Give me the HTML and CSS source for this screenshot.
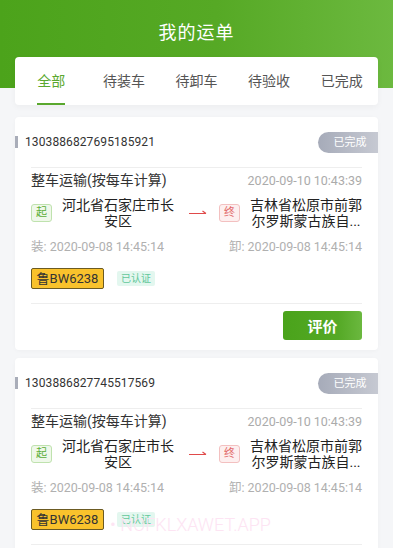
FILE: index.html
```html
<!DOCTYPE html>
<html lang="zh">
<head>
<meta charset="utf-8">
<title>我的运单</title>
<link rel="stylesheet" href="styles.css">
</head>
<body>
<header class="header">
  <h1 class="title">我的运单</h1>
</header>
<nav class="tabs">
  <div class="tab active"><span>全部</span></div>
  <div class="tab"><span>待装车</span></div>
  <div class="tab"><span>待卸车</span></div>
  <div class="tab"><span>待验收</span></div>
  <div class="tab"><span>已完成</span></div>
</nav>

<main class="list">
  <section class="card">
    <div class="card-head">
      <i class="mark"></i>
      <span class="order-no">1303886827695185921</span>
      <span class="status">已完成</span>
    </div>
    <div class="card-body">
      <div class="row-title">
        <span class="type">整车运输(按每车计算)</span>
        <span class="date">2020-09-10 10:43:39</span>
      </div>
      <div class="route">
        <div class="place">
          <span class="tag tag-start">起</span>
          <span class="addr">河北省石家庄市长安区</span>
        </div>
        <svg class="arrow" width="18" height="6" viewBox="0 0 18 6"><path d="M0 3.5H17M13.5 1L17 3.5" fill="none" stroke="#e04a4a" stroke-width="1.2"/></svg>
        <div class="place">
          <span class="tag tag-end">终</span>
          <span class="addr">吉林省松原市前郭尔罗斯蒙古族自...</span>
        </div>
      </div>
      <div class="row-times">
        <span>装: 2020-09-08 14:45:14</span>
        <span>卸: 2020-09-08 14:45:14</span>
      </div>
      <div class="row-tags">
        <span class="plate">鲁BW6238</span>
        <span class="verified">已认证</span>
      </div>
      <div class="actions">
        <button class="btn">评价</button>
      </div>
    </div>
  </section>

  <section class="card">
    <div class="card-head">
      <i class="mark"></i>
      <span class="order-no">1303886827745517569</span>
      <span class="status">已完成</span>
    </div>
    <div class="card-body">
      <div class="row-title">
        <span class="type">整车运输(按每车计算)</span>
        <span class="date">2020-09-10 10:43:39</span>
      </div>
      <div class="route">
        <div class="place">
          <span class="tag tag-start">起</span>
          <span class="addr">河北省石家庄市长安区</span>
        </div>
        <svg class="arrow" width="18" height="6" viewBox="0 0 18 6"><path d="M0 3.5H17M13.5 1L17 3.5" fill="none" stroke="#e04a4a" stroke-width="1.2"/></svg>
        <div class="place">
          <span class="tag tag-end">终</span>
          <span class="addr">吉林省松原市前郭尔罗斯蒙古族自...</span>
        </div>
      </div>
      <div class="row-times">
        <span>装: 2020-09-08 14:45:14</span>
        <span>卸: 2020-09-08 14:45:14</span>
      </div>
      <div class="row-tags">
        <span class="plate">鲁BW6238</span>
        <span class="verified">已认证</span>
      </div>
      <div class="actions">
        <button class="btn">评价</button>
      </div>
    </div>
  </section>
</main>
<div class="watermark">• NOFKLXAWET.APP</div>
</body>
</html>
```

FILE: styles.css
```css
* { box-sizing: border-box; }
html, body { margin: 0; padding: 0; }
body {
  width: 393px;
  height: 548px;
  overflow: hidden;
  background: #f5f6f8;
  font-family: Roboto, "Noto Sans CJK SC", sans-serif;
  color: #333;
  position: relative;
}
.header {
  height: 88px;
  background: linear-gradient(90deg, #4ca31b 0%, #56a925 55%, #6cb93f 100%);
  padding-top: 22px;
}
.title {
  margin: 0;
  font-size: 18px;
  line-height: 22px;
  font-weight: 400;
  color: #fff;
  text-align: center;
  letter-spacing: 1px;
}
.tabs {
  margin: -31px 15px 0;
  height: 48px;
  background: #fff;
  border-radius: 4px;
  display: flex;
  box-shadow: 0 2px 6px rgba(0,0,0,0.04);
}
.tab {
  flex: 1;
  text-align: center;
  padding-top: 14px;
  font-size: 14px;
  line-height: 20px;
  color: #555;
}
.tab span { display: inline-block; }
.tab.active span {
  color: #5aa82e;
  padding-bottom: 12px;
  border-bottom: 2px solid #5aa82e;
}
.list {
  padding: 12px 15px 0;
  display: flex;
  flex-direction: column;
  gap: 8px;
}
.card {
  background: #fff;
  border-radius: 4px;
  box-shadow: 0 1px 4px rgba(0,0,0,0.03);
  padding-bottom: 10px;
}
.card-head {
  height: 50px;
  display: flex;
  align-items: center;
  border-bottom: 1px solid #eeeeee;
  margin-right: 16px;
}
.mark {
  width: 3px;
  height: 12px;
  background: #a9adb9;
  margin-right: 7px;
}
.order-no {
  font-size: 12px;
  color: #333;
  letter-spacing: 0.1px;
}
.status {
  margin-left: auto;
  margin-right: -16px;
  width: 60px;
  height: 21px;
  line-height: 21px;
  border-radius: 10.5px 0 0 10.5px;
  background: linear-gradient(90deg, #a6abb9, #c6c9d2);
  color: #fff;
  font-size: 11px;
  text-align: center;
  padding-left: 4px;
}
.card-head { position: relative; }
.card-head::before { content: none; }
.card-head { border-bottom: none; }
.card-body {
  padding: 0 16px;
  border-top: 1px solid #eeeeee;
  margin: 0 0 0 0;
}
.card > .card-body { margin: 0 16px; padding: 0; }
.card > .card-head { margin-right: 0; padding-left: 0; }
.status { margin-right: 0; }
.row-title {
  display: flex;
  justify-content: space-between;
  align-items: center;
  padding-top: 2px;
  height: 22px;
}
.type { font-size: 14px; line-height: 20px; color: #333; }
.date { font-size: 12.5px; color: #ababab; }
.route {
  margin-top: 7px;
  display: flex;
  align-items: center;
}
.place {
  flex: 1;
  display: flex;
  align-items: center;
  gap: 10px;
}
.tag {
  width: 21px;
  height: 18px;
  flex: none;
  border-radius: 3px;
  font-size: 11px;
  line-height: 16px;
  text-align: center;
}
.tag-start { border: 1px solid #bfe2ae; background: #eff8ea; color: #5bae37; }
.tag-end { border: 1px solid #f3c0c0; background: #fdefef; color: #e26b6b; }
.addr {
  flex: 1;
  font-size: 14px;
  line-height: 16px;
  text-align: center;
  color: #222;
}
.arrow { flex: none; margin: 0 12px 0 15px; }
.row-times {
  margin-top: 9px;
  display: flex;
  justify-content: space-between;
  font-size: 12.5px;
  line-height: 18px;
  color: #b0b0b0;
}
.row-tags {
  margin-top: 12px;
  padding-bottom: 14px;
  display: flex;
  align-items: center;
  gap: 13px;
  border-bottom: 1px solid #eeeeee;
}
.plate {
  width: 73px;
  height: 21px;
  line-height: 19px;
  text-align: center;
  background: #f9c22c;
  border: 1px solid #6b5a22;
  border-radius: 2px;
  font-size: 13px;
  color: #333;
}
.verified {
  height: 15px;
  line-height: 15px;
  padding: 0 4px;
  background: #e3f7ef;
  color: #62c79a;
  font-size: 10px;
  border-radius: 2px;
}
.actions {
  display: flex;
  justify-content: flex-end;
  padding-top: 7px;
}
.btn {
  width: 79px;
  height: 29px;
  border: none;
  border-radius: 3px;
  background: linear-gradient(90deg, #4aa31b, #55a926 70%, #6bb83f);
  color: #fff;
  font-family: inherit;
  font-size: 15px;
  font-weight: 700;
  padding: 0;
}
.watermark {
  position: absolute;
  left: 110px;
  top: 514px;
  font-size: 18px;
  font-weight: 300;
  color: #fde4f3;
  pointer-events: none;
  white-space: nowrap;
}
```
